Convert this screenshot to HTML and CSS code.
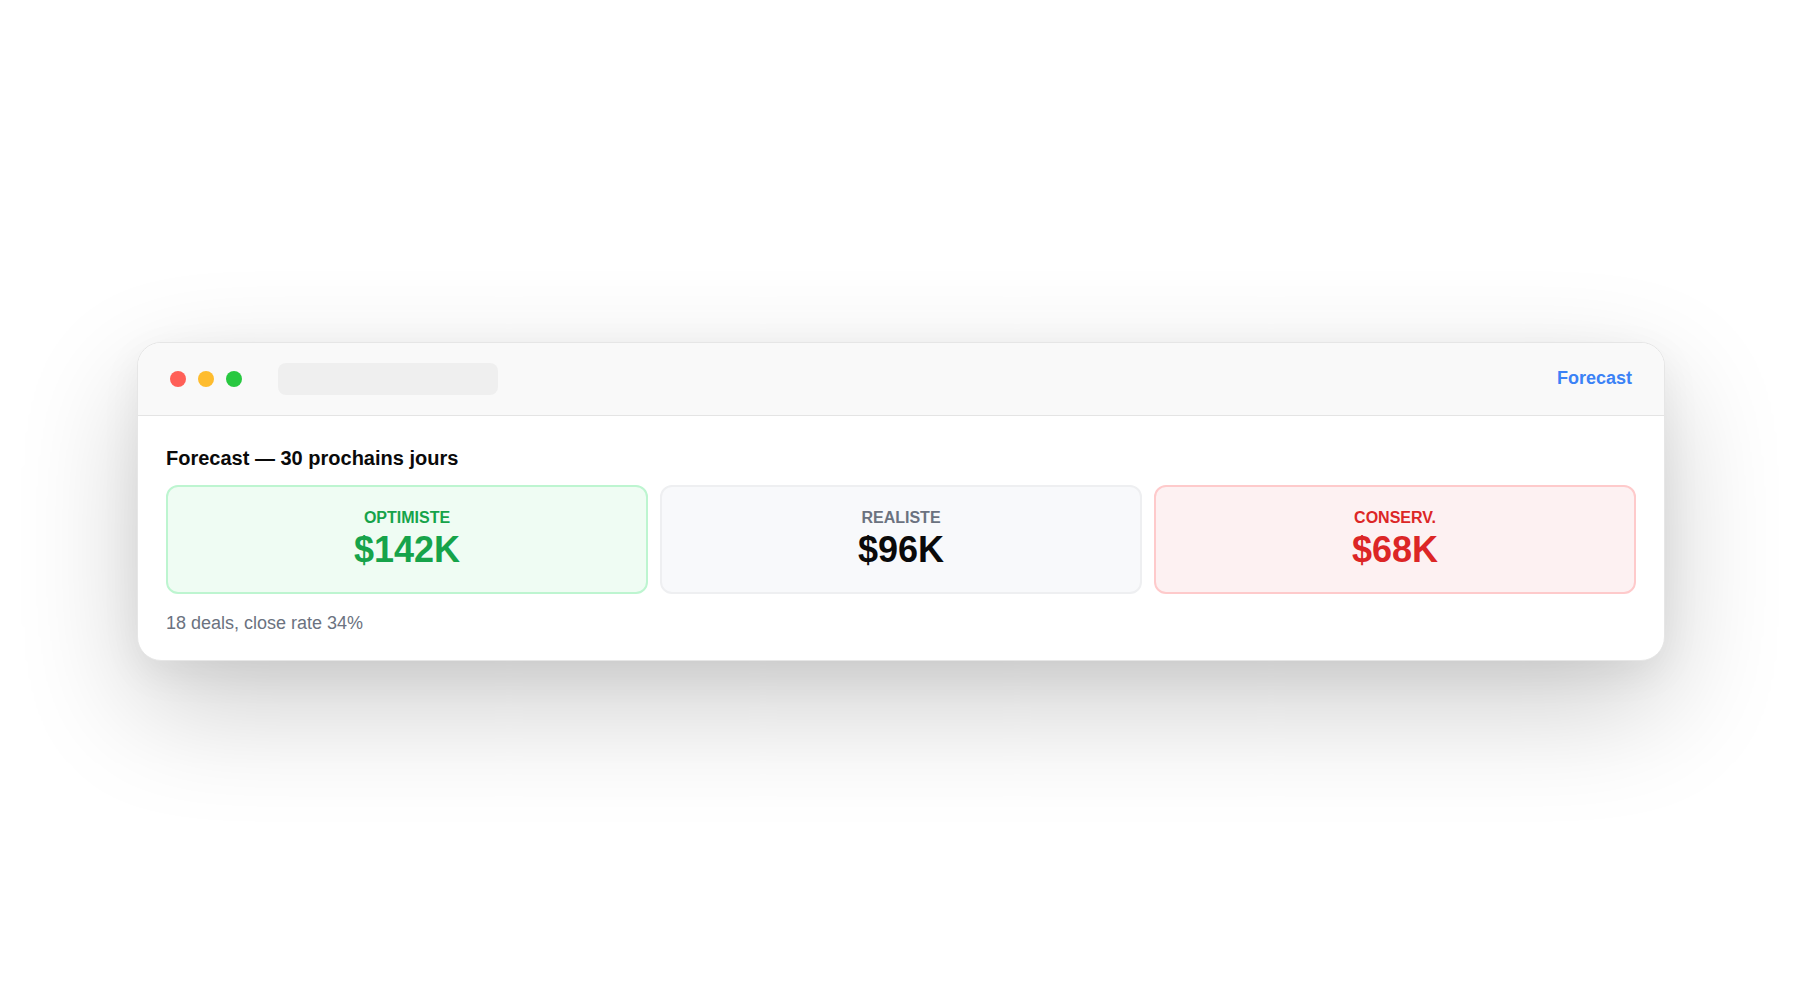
FILE: index.html
```html
<!DOCTYPE html>
<html lang="fr">
<head>
<meta charset="utf-8">
<title>Forecast</title>
<link rel="stylesheet" href="styles.css">
</head>
<body>
<div class="stage">
  <div class="window">
    <div class="titlebar">
      <div class="dots">
        <span class="dot dot-red"></span>
        <span class="dot dot-yellow"></span>
        <span class="dot dot-green"></span>
      </div>
      <div class="address"></div>
      <div class="spacer"></div>
      <a class="tab-link">Forecast</a>
    </div>
    <div class="content">
      <h1 class="heading">Forecast — 30 prochains jours</h1>
      <div class="cards">
        <div class="card card-green">
          <div class="card-label">OPTIMISTE</div>
          <div class="card-value">$142K</div>
        </div>
        <div class="card card-gray">
          <div class="card-label">REALISTE</div>
          <div class="card-value">$96K</div>
        </div>
        <div class="card card-red">
          <div class="card-label">CONSERV.</div>
          <div class="card-value">$68K</div>
        </div>
      </div>
      <p class="footnote">18 deals, close rate 34%</p>
    </div>
  </div>
</div>
</body>
</html>
```
FILE: styles.css
```css
html, body {
  margin: 0;
  padding: 0;
  background: #ffffff;
}
body {
  font-family: "Liberation Sans", Arial, Helvetica, sans-serif;
  color: #111111;
}
.stage {
  width: 1800px;
  height: 1000px;
  box-sizing: border-box;
  padding: 2px 0 0 2px;
  display: flex;
  align-items: center;
  justify-content: center;
}
.window {
  width: 1526px;
  background: #ffffff;
  border: 1px solid #e6e6e6;
  border-radius: 24px;
  overflow: hidden;
  box-shadow: 0 45px 120px rgba(0, 0, 0, 0.2), 0 12px 40px rgba(0, 0, 0, 0.06);
}
.titlebar {
  height: 72px;
  display: flex;
  align-items: center;
  padding: 0 32px;
  background: #f9f9f9;
  border-bottom: 1px solid #e4e4e4;
}
.dots {
  display: flex;
  gap: 12px;
}
.dot {
  width: 16px;
  height: 16px;
  border-radius: 50%;
  display: block;
}
.dot-red { background: #ff5f57; }
.dot-yellow { background: #febc2e; }
.dot-green { background: #28c840; }
.address {
  width: 220px;
  height: 32px;
  margin-left: 36px;
  border-radius: 8px;
  background: #efefef;
}
.spacer { flex: 1; }
.tab-link {
  font-size: 18px;
  font-weight: 700;
  color: #3b82f6;
  text-decoration: none;
}
.content {
  padding: 28px 28px 23px;
}
.heading {
  margin: 0 0 13px;
  font-size: 20px;
  line-height: 28px;
  font-weight: 700;
  color: #0a0a0a;
}
.cards {
  display: grid;
  grid-template-columns: repeat(3, 1fr);
  gap: 12px;
}
.card {
  border: 2px solid;
  border-radius: 12px;
  padding: 21px 16px 20px;
  text-align: center;
}
.card-label {
  font-size: 16px;
  line-height: 20px;
  font-weight: 700;
}
.card-value {
  font-size: 36px;
  line-height: 44px;
  font-weight: 700;
}
.card-green {
  background: #effcf3;
  border-color: #bdf5d0;
  color: #16a34a;
}
.card-gray {
  background: #f8f9fb;
  border-color: #eeeff1;
}
.card-gray .card-label { color: #6b7280; }
.card-gray .card-value { color: #0a0a0a; }
.card-red {
  background: #fdf1f2;
  border-color: #fecacb;
  color: #dc2626;
}
.footnote {
  margin: 15px 0 0;
  font-size: 18px;
  line-height: 28px;
  color: #6b7280;
}
```
